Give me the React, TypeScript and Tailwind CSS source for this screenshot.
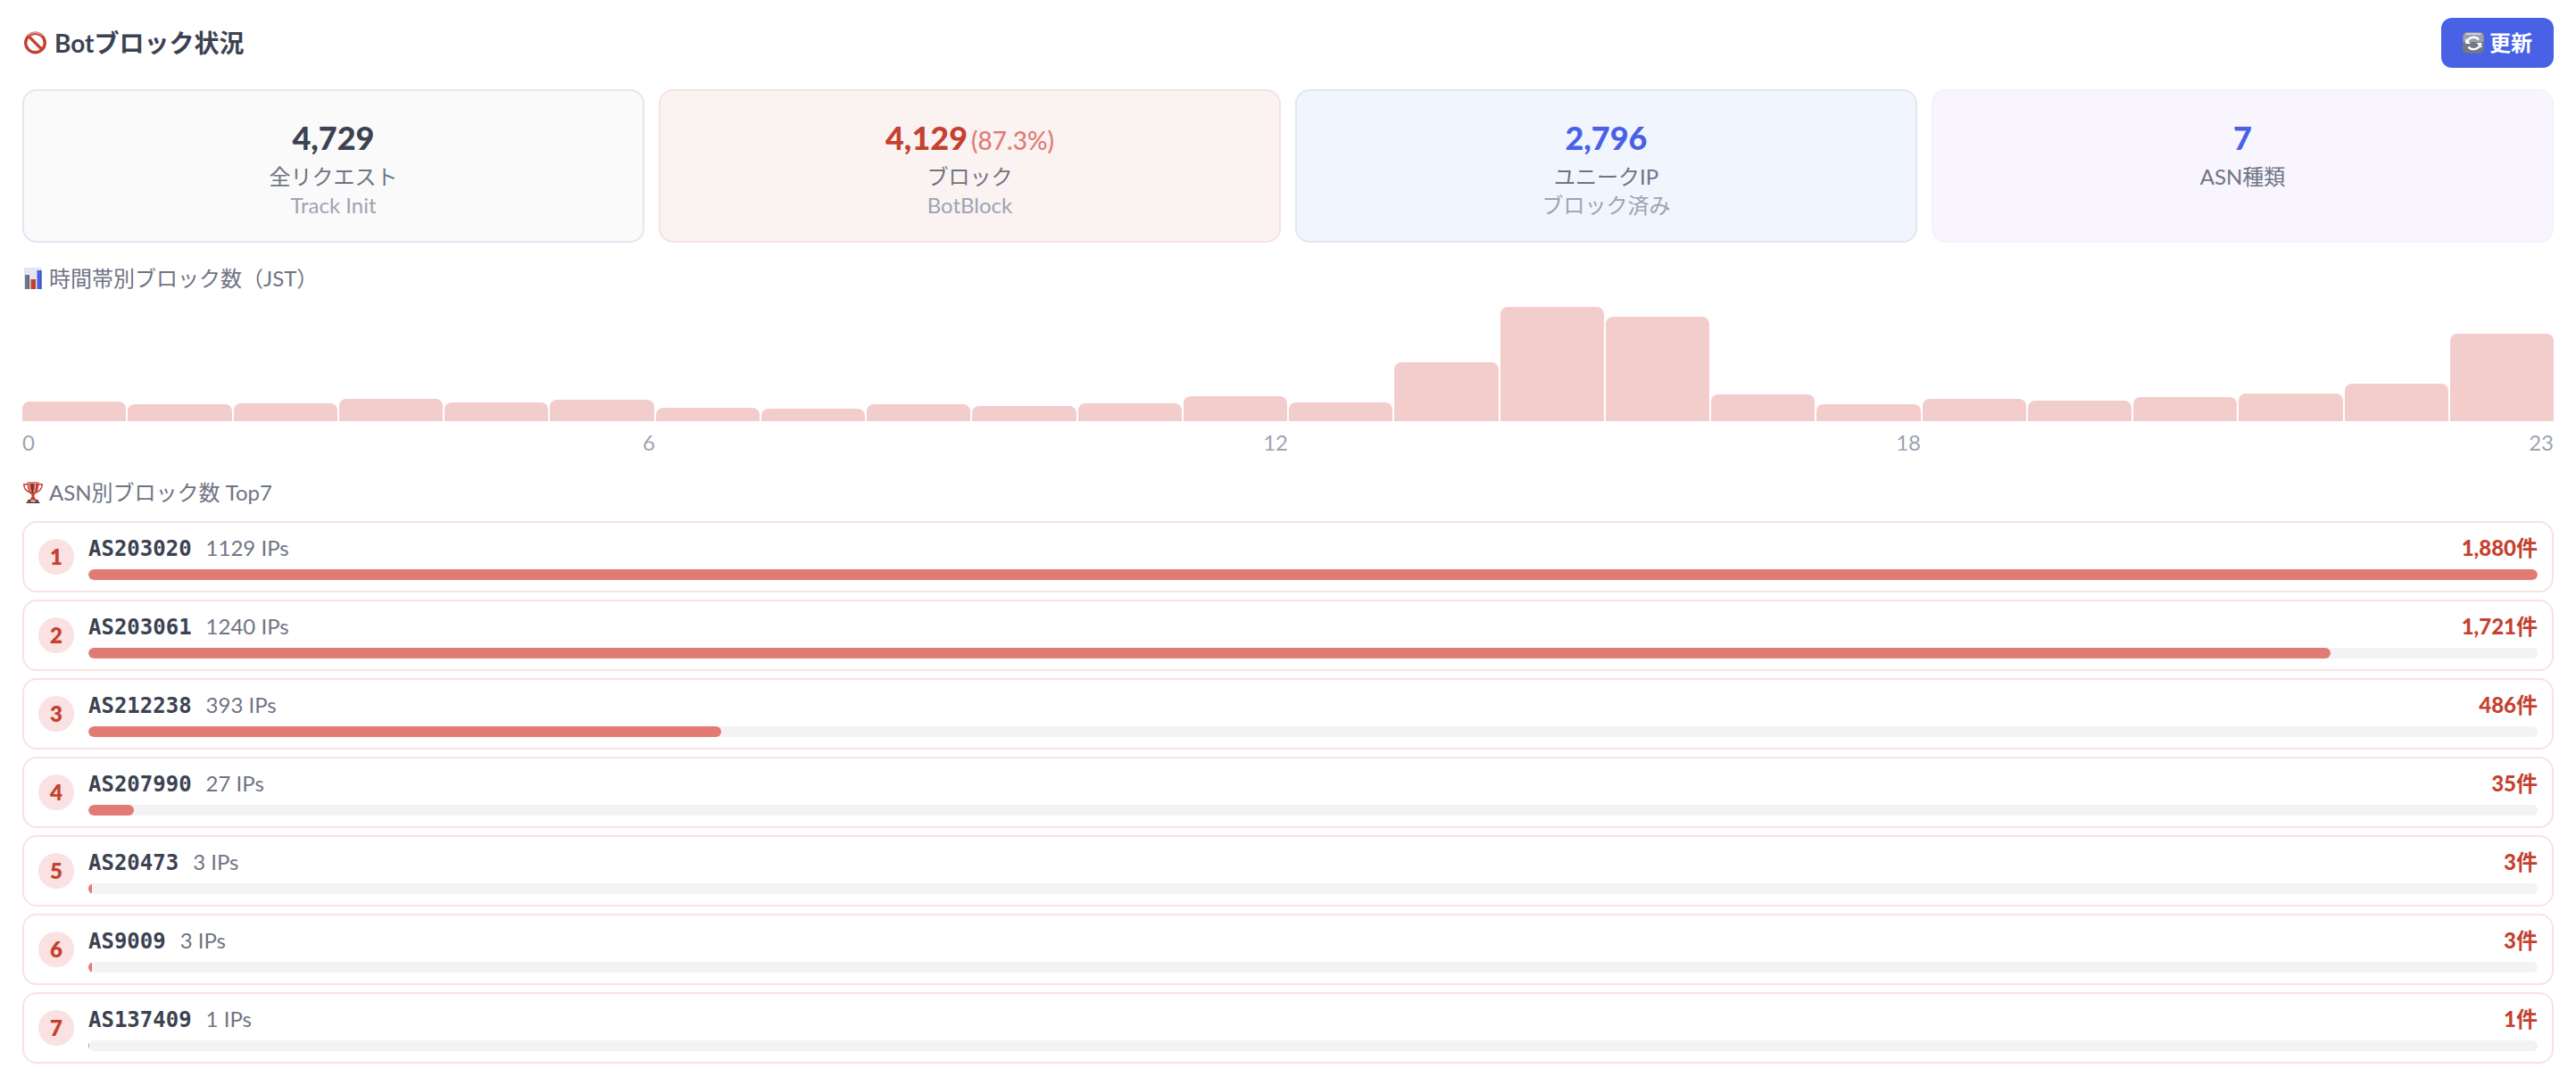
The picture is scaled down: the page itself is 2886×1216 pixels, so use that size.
import React from "react";

type Stat = {
    value: string;
    note?: string;
    label: string;
    sub?: string;
    box: string;
    color: string;
};

const stats: Stat[] = [
    { value: "4,729", label: "全リクエスト", sub: "Track Init", box: "bg-[#fafafa] border-[#e2e6f3]", color: "text-[#3b4252]" },
    { value: "4,129", note: "(87.3%)", label: "ブロック", sub: "BotBlock", box: "bg-[#fbf3f2] border-[#f9e2e1]", color: "text-[#c5412f]" },
    { value: "2,796", label: "ユニークIP", sub: "ブロック済み", box: "bg-[#f1f5fe] border-[#e2e6f3]", color: "text-[#4861e5]" },
    { value: "7", label: "ASN種類", box: "bg-[#f8f5fe] border-[#f0f3fe]", color: "text-[#4861e5]" },
];

// Bar heights in px, one per hour
const hourly = [22, 19, 20, 25, 21, 24, 15, 14, 19, 17, 20, 28, 21, 66, 128, 117, 30, 19, 25, 23, 27, 31, 42, 98];

const asns = [
    { asn: "AS203020", ips: 1129, count: 1880 },
    { asn: "AS203061", ips: 1240, count: 1721 },
    { asn: "AS212238", ips: 393, count: 486 },
    { asn: "AS207990", ips: 27, count: 35 },
    { asn: "AS20473", ips: 3, count: 3 },
    { asn: "AS9009", ips: 3, count: 3 },
    { asn: "AS137409", ips: 1, count: 1 },
];

function BanIcon() {
    return (
        <svg viewBox="0 0 28 28" className="size-7 shrink-0" aria-hidden="true">
            <circle cx="14.5" cy="14" r="10.8" fill="#fff" stroke="#c5412f" strokeWidth="3.4" />
            <path d="M7 6.500 22 21.500" stroke="#c5412f" strokeWidth="3.200" />
            <path d="M6.500 5.800a11.500 11.500 0 0 1 16 0" fill="none" stroke="#e9a49d" strokeWidth="1.200" />
        </svg>
    );
}

function RefreshIcon() {
    return (
        <svg viewBox="0 0 24 24" className="size-6 shrink-0" aria-hidden="true">
            <rect width="24" height="24" rx="5" fill="#737886" />
            <path d="M0.5 11V5A4.500 4.500 0 0 1 5 .5h14A4.500 4.500 0 0 1 23.500 5v6z" fill="#9aa0b0" />
            <path d="M4 2h16" stroke="#dde0ea" strokeWidth="1.600" strokeLinecap="round" />
            <path d="M5 12a7.200 6.500 0 0 1 13-3.500M19.500 13a7.200 6.500 0 0 1-13 3.500" fill="none" stroke="#fff" strokeWidth="2.400" />
            <path d="M3.200 7v6h6zM21.300 18v-6h-6z" fill="#fff" />
        </svg>
    );
}

function ChartIcon() {
    return (
        <svg viewBox="0 0 24 24" className="size-6 shrink-0" aria-hidden="true">
            <path d="M2 0h20v24H2z" fill="#e2e6f3" />
            <path d="M3 8h5v16H3z" fill="#737886" />
            <path d="M9.500 13h5.500v11H9.500z" fill="#c5412f" />
            <path d="M16.500 3h5v21h-5z" fill="#4861e5" />
            <path d="M20.500 3h1v21h-1zM7 9h1v15H7z" fill="#3b4252" fillOpacity=".6" />
        </svg>
    );
}

function TrophyIcon() {
    return (
        <svg viewBox="0 0 24 24" className="size-6 shrink-0" aria-hidden="true">
            <path d="M6 2.800H1.800c0 5 2.400 8 7.500 9.500M18 2.800h4.200c0 5-2.400 8-7.500 9.500" fill="none" stroke="#c5412f" strokeWidth="1.500" />
            <path d="M5.500 .5h13c0 7-1.600 12-5 14v4h-3v-4C7.100 12.500 5.500 7.500 5.500 .5z" fill="#c5412f" />
            <path d="M10 1h2v12c-1.500-2-2-6-2-12z" fill="#3b4252" />
            <path d="M14.500 1.500c0 5-.4 8-1.500 10.500M7.500 2c.2 4 .8 6.500 2 9" fill="none" stroke="#f3cdcb" strokeWidth="1" />
            <ellipse cx="12" cy="1.200" rx="6.500" ry="1" fill="#e27b75" />
            <path d="M10.500 17h3l2.500 3.500H8z" fill="#c5412f" />
            <path d="M4.500 22.500h15V24h-15z" fill="#3b4252" />
            <path d="M6 20h12v3H6z" fill="#8e3a36" />
            <path d="M9.500 20.500h5v2h-5z" fill="#f3cdcb" />
        </svg>
    );
}

function StatCard({ stat }: { stat: Stat }) {
    return (
        <div className={`rounded-2xl border-2 p-6 text-center ${stat.box}`}>
            <div className={`text-4xl leading-14 font-black ${stat.color}`}>
                {stat.value}
                {stat.note && <span className="ml-1 text-[28px] leading-none font-medium text-[#e27b75]">{stat.note}</span>}
            </div>
            <div>{stat.label}</div>
            {stat.sub && <div className="text-[#9da3b3]">{stat.sub}</div>}
        </div>
    );
}

export default function App() {
    const max = asns[0].count;

    return (
        <main className="bg-white px-[25px] py-5 font-['Lato','Noto_Sans_CJK_JP',sans-serif] text-2xl leading-8 text-[#6f7484]">
            <header className="mb-6 flex items-center justify-between">
                <h1 className="flex items-center gap-2 text-[28px] leading-10 font-bold text-[#3b4252]">
                    <BanIcon />
                    Botブロック状況
                </h1>
                <button type="button" className="flex items-center gap-1.5 rounded-xl bg-[#4861e5] px-6 py-3 leading-8 font-bold text-white">
                    <RefreshIcon />
                    更新
                </button>
            </header>

            <section className="mb-6 grid grid-cols-4 gap-4">
                {stats.map((stat) => (
                    <StatCard key={stat.label} stat={stat} />
                ))}
            </section>

            <section className="mb-6">
                <h2 className="mb-4 flex items-center gap-1.5">
                    <ChartIcon />
                    時間帯別ブロック数（JST）
                </h2>
                <div className="flex h-32 items-end gap-0.5">
                    {hourly.map((h, i) => (
                        <div key={i} className="flex-1 rounded-t-lg bg-[#f3cdcb]" style={{ height: h }} />
                    ))}
                </div>
                <div className="mt-2 flex justify-between text-[#9da3b3]">
                    {[0, 6, 12, 18, 23].map((h) => (
                        <span key={h}>{h}</span>
                    ))}
                </div>
            </section>

            <section>
                <h2 className="mb-4 flex items-center gap-1.5">
                    <TrophyIcon />
                    ASN別ブロック数 Top7
                </h2>
                <ol className="flex flex-col gap-2">
                    {asns.map((row, i) => (
                        <li key={row.asn} className="flex items-center gap-4 rounded-2xl border-2 border-[#f9e2e1] bg-white px-4 py-3">
                            <span className="flex size-10 shrink-0 items-center justify-center rounded-full bg-[#f9e2e1] font-extrabold text-[#c5412f]">
                                {i + 1}
                            </span>
                            <div className="flex-1">
                                <div className="mb-2 flex justify-between">
                                    <div className="flex items-baseline gap-4">
                                        <span className="font-['DejaVu_Sans_Mono',monospace] leading-none font-bold text-[#3b4252]">{row.asn}</span>
                                        <span>{row.ips} IPs</span>
                                    </div>
                                    <span className="font-bold text-[#c5412f]">
                                        <span className="font-black">{row.count.toLocaleString("en-US")}</span>件
                                    </span>
                                </div>
                                <div className="h-3 overflow-hidden rounded-full bg-[#f3f3f6]">
                                    <div className="h-full rounded-full bg-[#e27b75]" style={{ width: `${(row.count / max) * 100}%` }} />
                                </div>
                            </div>
                        </li>
                    ))}
                </ol>
            </section>
        </main>
    );
}
